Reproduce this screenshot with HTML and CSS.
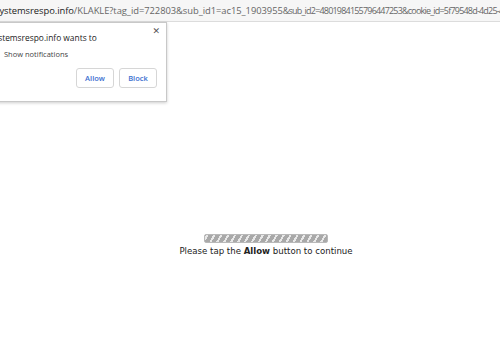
FILE: index.html
```html
<!DOCTYPE html>
<html>
<head>
<meta charset="utf-8">
<link rel="stylesheet" href="styles.css">
</head>
<body>
<div class="topbar">
  <div class="url"><span class="host">systemsrespo.info</span><span class="path">/KLAKLE?tag_id=722803&amp;sub_id1=ac15_1903955</span><span class="path tight">&amp;sub_id2=4801984155796447253&amp;cookie_id=5f79548d-4d25-4c9d-4f2a</span></div>
</div>
<div class="content">
  <div class="progress"></div>
  <p class="msg">Please tap the <b>Allow</b> button to continue</p>
</div>
<div class="popup">
  <div class="close">✕</div>
  <div class="title">systemsrespo.info wants to</div>
  <div class="perm">Show notifications</div>
  <div class="buttons">
    <button class="btn">Allow</button>
    <button class="btn">Block</button>
  </div>
</div>
</body>
</html>
```
FILE: styles.css
```css
html, body { margin: 0; padding: 0; background: #fff; }
body { width: 500px; height: 350px; overflow: hidden; position: relative; font-family: "Open Sans", "Noto Sans", sans-serif; }
.topbar { height: 21px; background: #f6f6f6; border-bottom: 1px solid #dcdcdc; overflow: hidden; white-space: nowrap; }
.url { margin-left: -5px; padding-top: 3px; font-size: 9.4px; line-height: 16px; letter-spacing: -0.05px; }
.host { color: #222; }
.path { color: #666; }
.tight { font-size: 9px; letter-spacing: -0.8px; }
.content { display: flex; flex-direction: column; align-items: center; padding-top: 212px; padding-left: 32px; }
.progress { width: 122px; height: 7px; border: 1px solid #b9b9b9; border-radius: 2px;
  background: repeating-linear-gradient(-60deg, #a9a9a9 0 4px, #e8e8e8 4px 6px); }
.msg { margin: 3px 0 0; font-family: "DejaVu Sans", Verdana, sans-serif; font-size: 8.6px; color: #222; }
.popup { position: absolute; left: -22px; top: 22px; width: 187px; height: 78px; background: #fff; border: 1px solid #c8c8c8; box-shadow: 0 1px 3px rgba(0,0,0,0.2); }
.close { position: absolute; right: 6px; top: 3px; font-size: 9px; color: #555; font-family: "DejaVu Sans", sans-serif; }
.title { margin: 9px 0 0 11px; font-size: 8.4px; color: #222; }
.perm { margin: 6px 0 0 25px; font-size: 7.5px; color: #444; }
.buttons { display: flex; justify-content: flex-end; gap: 5px; margin: 9px 9px 0 0; }
.btn { width: 38px; height: 20px; padding: 0; background: #fff; border: 1px solid #d6d6d6; border-radius: 3px; color: #3b6fd0; font-family: "Open Sans", sans-serif; font-weight: 600; font-size: 7.5px; }
```
